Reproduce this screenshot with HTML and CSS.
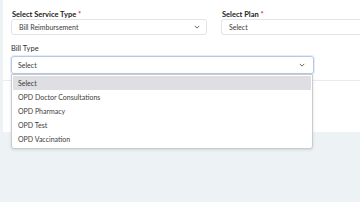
FILE: index.html
```html
<!DOCTYPE html>
<html lang="en">
<head>
    <meta charset="UTF-8">
    <meta name="viewport" content="width=device-width, initial-scale=1.0">
    <title>Claim Request</title>
    <link rel="stylesheet" href="styles.css">
</head>
<body>
    <div class="card">
        <div class="form-row">
            <div class="field">
                <label class="label label-strong">Select Service Type <span class="req">*</span></label>
                <div class="input">
                    <span>Bill Reimbursement</span>
                    <svg class="chevron" viewBox="0 0 8 5"><path d="M1 1l3 3 3-3" /></svg>
                </div>
            </div>
            <div class="field">
                <label class="label label-strong">Select Plan <span class="req">*</span></label>
                <div class="input">
                    <span>Select</span>
                </div>
            </div>
        </div>

        <div class="field field-wide">
            <label class="label">Bill Type</label>
            <div class="dropdown">
                <div class="input input-focus">
                    <span>Select</span>
                    <svg class="chevron" viewBox="0 0 8 5"><path d="M1 1l3 3 3-3" /></svg>
                </div>
                <ul class="menu">
                    <li class="active">Select</li>
                    <li>OPD Doctor Consultations</li>
                    <li>OPD Pharmacy</li>
                    <li>OPD Test</li>
                    <li>OPD Vaccination</li>
                </ul>
            </div>
        </div>

        <div class="divider"></div>
    </div>
</body>
</html>
```

FILE: styles.css
```css
* {
    margin: 0;
    padding: 0;
    box-sizing: border-box;
}

body {
    font-family: Lato, 'Open Sans', sans-serif;
    background: #edf3f5;
    width: 360px;
    height: 202px;
    overflow: hidden;
    color: #333;
}

.card {
    background: #fff;
    margin-left: 3px;
    height: 132px;
    padding: 10px 0 0 8px;
}

.form-row {
    display: grid;
    grid-template-columns: 196px 1fr;
    gap: 14px;
}

.field {
    display: flex;
    flex-direction: column;
}

.field-wide {
    width: 303px;
    margin-top: 9px;
}

.label {
    font-size: 7.5px;
    line-height: 9px;
    color: #333;
}

.label-strong {
    font-weight: 700;
    color: #222;
    padding-left: 1px;
}

.field-wide .label {
    margin-bottom: 3px;
}

.req {
    color: #d0343a;
}

.input {
    height: 16px;
    border: 1px solid #e2e5e8;
    border-radius: 3px;
    display: flex;
    align-items: center;
    justify-content: space-between;
    padding: 0 6px 0 7px;
    font-size: 7px;
    color: #3a3a3a;
}

.field:last-child > .input {
    border-right: none;
    border-radius: 3px 0 0 3px;
}

.chevron {
    width: 6px;
    height: 4px;
    fill: none;
    stroke: #555;
    stroke-width: 1.2;
}

.dropdown {
    position: relative;
}

.input-focus {
    height: 18px;
    border-color: #b9c9e4;
    box-shadow: 0 0 0 1px #e3ebf7;
    padding: 0 8px 0 6px;
}

.menu {
    position: absolute;
    top: 18px;
    left: 0;
    right: 1px;
    list-style: none;
    background: #fff;
    border: 1px solid #c9cccf;
    border-radius: 0 0 3px 3px;
    box-shadow: 0 1px 3px rgba(0, 0, 0, 0.12);
    padding: 1px 1px 2px;
    z-index: 2;
}

.menu li {
    font-size: 7px;
    line-height: 14px;
    height: 14px;
    padding-left: 5px;
    color: #3c3c3c;
}

.menu li.active {
    background: #dedee3;
}

.divider {
    border-top: 1px solid #e8ecee;
    margin-top: 6px;
    margin-left: -8px;
}
```
